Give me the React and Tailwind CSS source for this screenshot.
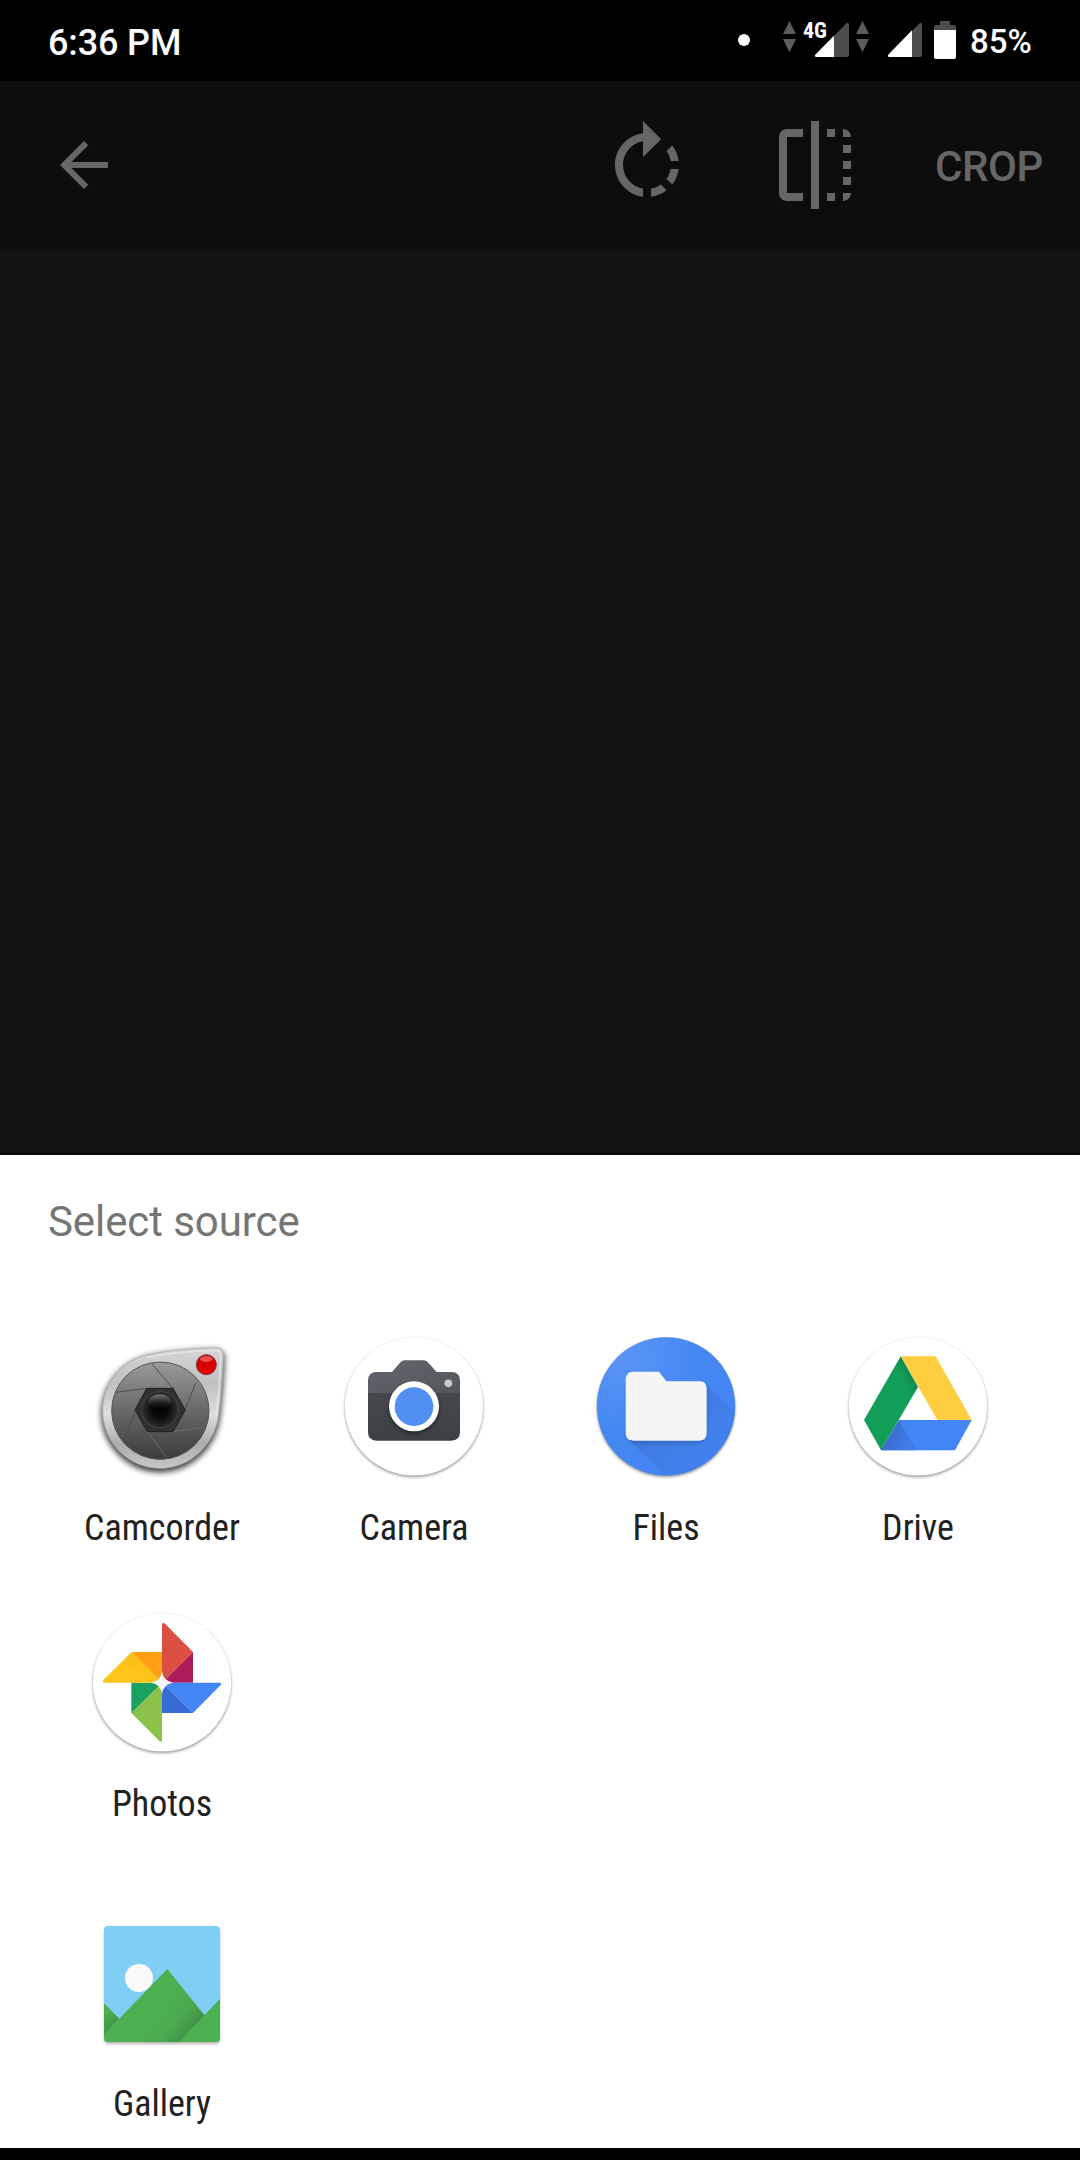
import React from "react";

function DataArrows({ className }) {
  return (
    <svg className={className} width="13" height="32" viewBox="0 0 39 96" fill="#5c5c5c">
      <path d="M19.500 0L39 39H0zM19.500 94L39 54H0z" />
    </svg>
  );
}

function Signal({ className, level }) {
  return (
    <svg className={className} width="34" height="34" viewBox="0 0 102 102">
      <path d="M0 97L93 2Q102 -4 102 6V96Q102 102 96 102H4Q-1 102 0 97Z" fill="#4d4d4d" />
      <path d={level === "low" ? "M0 96L57 38V102H4Q-1 102 0 96Z" : "M0 96L72 22V102H4Q-1 102 0 96Z"} fill="#fff" />
    </svg>
  );
}

function StatusBar() {
  return (
    <div className="flex h-[81px] items-start bg-black pl-12 text-white">
      <span className="mt-[22px] w-[690px] text-[36px] leading-[42px] font-medium tracking-[-0.15px]">6:36 PM</span>
      <span className="mt-[34px] h-3 w-3 shrink-0 rounded-full bg-white" />
      <DataArrows className="mt-[21px] ml-[33px] shrink-0" />
      <div className="relative mt-[23px] ml-[19px] shrink-0">
        <Signal level="low" />
        <span className="absolute -top-[5px] -left-[12px] font-['Roboto_Condensed','Roboto'] text-[22px] leading-[26px] font-bold">4G</span>
      </div>
      <DataArrows className="mt-[21px] ml-[7px] shrink-0" />
      <Signal className="mt-[23px] ml-[19px] shrink-0" level="high" />
      <svg className="mt-[21px] ml-3 shrink-0" width="22" height="38" viewBox="0 0 66 114">
        <path d="M18 0H48V12H60Q66 12 66 18V27H0V18Q0 12 6 12H18Z" fill="#4d4d4d" />
        <path d="M0 27H66V108Q66 114 60 114H6Q0 114 0 108Z" fill="#fff" />
      </svg>
      <span className="mt-[21px] ml-[14px] text-[33px] leading-[42px] font-medium">85%</span>
    </div>
  );
}

function Toolbar() {
  return (
    <div className="flex h-[168px] items-center bg-[#0d0d0d] pr-9 pl-12 text-[#666]">
      <svg width="72" height="72" viewBox="0 0 24 24" fill="currentColor">
        <path d="M20 11H7.830l5.590-5.590L12 4l-8 8 8 8 1.410-1.410L7.830 13H20v-2z" />
      </svg>
      <svg className="ml-auto" width="96" height="96" viewBox="0 0 24 24" fill="currentColor">
        <path d="M15.550 5.550L11 1v3.070C7.060 4.560 4 7.920 4 12s3.050 7.440 7 7.930v-2.020c-2.840-.48-5-2.940-5-5.910s2.160-5.430 5-5.910V10l4.550-4.450zM19.930 11c-.17-1.390-.72-2.730-1.620-3.890l-1.420 1.420c.54.75.88 1.600 1.020 2.470h2.020zM13 17.900v2.020c1.390-.17 2.740-.71 3.900-1.610l-1.440-1.440c-.75.54-1.590.89-2.460 1.030zm3.890-2.420l1.420 1.410c.9-1.160 1.450-2.500 1.620-3.890h-2.020c-.14.87-.48 1.720-1.020 2.480z" />
      </svg>
      <svg className="ml-[72px]" width="96" height="96" viewBox="0 0 24 24" fill="currentColor">
        <path d="M15 21h2v-2h-2v2zm4-12h2V7h-2v2zM3 5v14c0 1.100.9 2 2 2h4v-2H5V5h4V3H5c-1.100 0-2 .9-2 2zm16-2v2h2c0-1.100-.9-2-2-2zm-8 20h2V1h-2v22zm8-6h2v-2h-2v2zM15 5h2V3h-2v2zm4 8h2v-2h-2v2zm0 8c1.100 0 2-.9 2-2h-2v2z" />
      </svg>
      <span className="ml-[71px] w-[110px] pt-[3px] pl-px text-[42px] leading-[48px] font-medium tracking-[-0.4px] whitespace-nowrap">CROP</span>
    </div>
  );
}

function Disc({ cx, cy, fill = "#fff" }) {
  return (
    <>
      <circle cx={cx} cy={cy + 5} r="207" fill="#000" opacity=".42" filter="url(#disc-blur)" />
      <circle cx={cx} cy={cy} r="209" fill="#000" opacity=".04" />
      <circle cx={cx} cy={cy} r="207.500" fill={fill} />
    </>
  );
}

function CamcorderIcon() {
  return (
    <svg width="144" height="144" viewBox="60 48 432 432">
      <defs>
        <linearGradient id="cc-body" x1="0" y1="0" x2="0" y2="1">
          <stop offset="0" stopColor="#d6d6d6" />
          <stop offset=".3" stopColor="#c0c0c0" />
          <stop offset=".55" stopColor="#dedede" />
          <stop offset=".8" stopColor="#acacac" />
          <stop offset="1" stopColor="#c8c8c8" />
        </linearGradient>
        <linearGradient id="cc-blades" x1="0" y1="0" x2="0" y2="1">
          <stop offset="0" stopColor="#9a9a9a" />
          <stop offset=".5" stopColor="#686868" />
          <stop offset="1" stopColor="#3c3c3c" />
        </linearGradient>
        <radialGradient id="cc-lens">
          <stop offset="0" stopColor="#000" />
          <stop offset=".5" stopColor="#0c0c0c" />
          <stop offset="1" stopColor="#303030" />
        </radialGradient>
        <linearGradient id="cc-glare" x1="0" y1="0" x2="0" y2="1">
          <stop offset="0" stopColor="#777" />
          <stop offset="1" stopColor="#222" stopOpacity="0" />
        </linearGradient>
        <linearGradient id="cc-led" x1="0" y1="0" x2="0" y2="1">
          <stop offset="0" stopColor="#c40000" />
          <stop offset=".5" stopColor="#d60000" />
          <stop offset="1" stopColor="#f00000" />
        </linearGradient>
        <filter id="cc-shadow" x="-20%" y="-20%" width="140%" height="140%">
          <feGaussianBlur stdDeviation="10" />
        </filter>
        <filter id="cc-soft" x="-20%" y="-20%" width="140%" height="140%">
          <feGaussianBlur stdDeviation="2" />
        </filter>
      </defs>
      <path d="M226 106C305 88 375 86 438 84Q462 85 460 110C458 165 454 225 445 290C432 375 360 445 271 445C176 445 98 368 98 272C98 190 155 125 226 106Z" transform="translate(0 8)" fill="#000" stroke="#000" strokeWidth="6" opacity=".8" filter="url(#cc-shadow)" />
      <path d="M226 106C305 88 375 86 438 84Q462 85 460 110C458 165 454 225 445 290C432 375 360 445 271 445C176 445 98 368 98 272C98 190 155 125 226 106Z" fill="url(#cc-body)" stroke="#aaa" strokeWidth="2" />
      <path d="M230 113C305 96 375 93 436 91Q453 92 452 110C450 165 446 225 438 288" fill="none" stroke="#eee" strokeWidth="5" opacity=".6" filter="url(#cc-soft)" />
      <circle cx="271" cy="272" r="146" fill="url(#cc-blades)" stroke="#555" strokeWidth="3" />
      <g fill="none" stroke="#4b4b4b" strokeWidth="3">
        <path d="M246 132L310 206M138 217L229 205M162 362L197 270" />
        <path d="M378 187L344 272" />
      </g>
      <path d="M402 322L308 335M290 413L232 335" fill="none" stroke="#707070" strokeWidth="2.500" />
      <path d="M230 205H309L346 270L309 335H232L195 270Z" fill="#303030" stroke="#202020" strokeWidth="3" />
      <circle cx="270" cy="269" r="55" fill="url(#cc-lens)" stroke="#444" strokeWidth="3" />
      <ellipse cx="269" cy="244" rx="34" ry="21" fill="url(#cc-glare)" />
      <circle cx="409" cy="134" r="30" fill="url(#cc-led)" stroke="#713a3a" strokeWidth="3" />
      <ellipse cx="409" cy="117" rx="19" ry="9" fill="#ff8080" opacity=".6" filter="url(#cc-soft)" />
    </svg>
  );
}

function CameraIcon() {
  return (
    <svg width="144" height="144" viewBox="66 48 432 432">
      <defs>
        <filter id="disc-blur" x="-10%" y="-10%" width="120%" height="120%">
          <feGaussianBlur stdDeviation="4" />
        </filter>
        <filter id="cam-blur" x="-30%" y="-30%" width="160%" height="160%">
          <feGaussianBlur stdDeviation="7" />
        </filter>
        <linearGradient id="cam-top" x1="0" y1="0" x2="1" y2="1">
          <stop offset="0" stopColor="#5f656a" />
          <stop offset="1" stopColor="#52585d" />
        </linearGradient>
        <linearGradient id="cam-body" x1="0" y1="0" x2="0" y2="1">
          <stop offset="0" stopColor="#45484c" />
          <stop offset="1" stopColor="#3c3f44" />
        </linearGradient>
      </defs>
      <Disc cx={282} cy={259} />
      <path d="M144 218H420V336Q420 362 394 362H170Q144 362 144 336Z" fill="url(#cam-body)" />
      <path d="M144 219V182Q144 156 170 156H216L240 128Q246 121 255 121H310Q319 121 325 128L350 156H394Q420 156 420 182V219Z" fill="url(#cam-top)" />
      <circle cx="282" cy="266" r="75" fill="#000" opacity=".4" filter="url(#cam-blur)" />
      <circle cx="282" cy="259" r="75" fill="#fff" />
      <circle cx="282" cy="260" r="58" fill="#528ff3" />
      <circle cx="385" cy="190" r="11.500" fill="#c8caca" />
    </svg>
  );
}

function FilesIcon() {
  return (
    <svg width="144" height="144" viewBox="72 48 432 432">
      <defs>
        <radialGradient id="files-bg" cx=".2" cy=".17" r=".9">
          <stop offset="0" stopColor="#5894f4" />
          <stop offset=".6" stopColor="#4588f3" />
          <stop offset="1" stopColor="#4285f4" />
        </radialGradient>
        <linearGradient id="files-shade" gradientUnits="userSpaceOnUse" x1="288" y1="270" x2="395" y2="377">
          <stop offset="0" stopColor="#3a6cc9" stopOpacity=".6" />
          <stop offset="1" stopColor="#3f78dc" stopOpacity=".35" />
        </linearGradient>
        <clipPath id="files-clip"><circle cx="288" cy="259" r="207" /></clipPath>
      </defs>
      <Disc cx={288} cy={259} fill="url(#files-bg)" />
      <g clipPath="url(#files-clip)">
        <path d="M174 356L300 482H510V290L404 190Z" fill="url(#files-shade)" />
        <rect x="170" y="194" width="238" height="173" rx="24" fill="#214484" opacity=".5" filter="url(#cam-blur)" />
      </g>
      <path d="M190 155H267L289 184H388Q410 184 410 206V340Q410 362 388 362H190Q167 362 167 340V178Q167 155 190 155Z" fill="#f5f5f5" />
    </svg>
  );
}

function DriveIcon() {
  return (
    <svg width="144" height="144" viewBox="78 48 432 432">
      <defs>
        <linearGradient id="drive-shade" gradientUnits="userSpaceOnUse" x1="208" y1="346" x2="262" y2="376">
          <stop offset="0" stopColor="#3a6dd0" />
          <stop offset="1" stopColor="#407be6" />
        </linearGradient>
        <linearGradient id="drive-green" gradientUnits="userSpaceOnUse" x1="276" y1="158" x2="250" y2="172">
          <stop offset="0" stopColor="#0d8449" />
          <stop offset="1" stopColor="#129d58" />
        </linearGradient>
      </defs>
      <Disc cx={294} cy={259} />
      <path d="M242 109H347L455 300H352Z" fill="#ffcd40" />
      <path d="M242 109L294 201L183 391L132 300Z" fill="url(#drive-green)" />
      <path d="M237 300H455L405 391H183Z" fill="#4285f4" />
      <path d="M237 300L288 391H183Z" fill="url(#drive-shade)" />
    </svg>
  );
}

function PhotosIcon() {
  return (
    <svg width="144" height="144" viewBox="60 36 432 432">
      <defs>
        <linearGradient id="ph-yellow" x1="0" y1="1" x2="1" y2="0">
          <stop offset=".4" stopColor="#ffc518" />
          <stop offset="1" stopColor="#f5b70f" />
        </linearGradient>
        <linearGradient id="ph-lime" x1="0" y1="0" x2="1" y2="1">
          <stop offset="0" stopColor="#7fb84c" />
          <stop offset=".5" stopColor="#8bc34a" />
        </linearGradient>
      </defs>
      <Disc cx={276} cy={247} />
      <path d="M276 72Q280 67 285 71L369 156L276 248Z" fill="#db4f42" />
      <path d="M369 156V248H276Z" fill="#ae1b5a" />
      <path d="M276 248H450Q456 250 452 255L369 339Z" fill="#4285f4" />
      <path d="M276 248L369 339H276Z" fill="#386ad6" />
      <path d="M276 248V421Q274 427 269 424L184 339Z" fill="url(#ph-lime)" />
      <path d="M276 248L184 339V248Z" fill="#1aa15f" />
      <path d="M276 248H101Q96 245 100 240L185 156Z" fill="url(#ph-yellow)" />
      <path d="M185 156H276V248Z" fill="#ff9f14" />
      <path d="M276 214Q280 243 309 248Q280 252 276 282Q272 252 243 248Q272 243 276 214Z" fill="#f5f5f5" />
    </svg>
  );
}

function GalleryIcon() {
  return (
    <svg width="144" height="144" viewBox="60 36 432 432">
      <defs>
        <linearGradient id="gal-main" gradientUnits="userSpaceOnUse" x1="365" y1="385" x2="285" y2="325">
          <stop offset="0" stopColor="#429546" />
          <stop offset=".5" stopColor="#4ba94f" />
          <stop offset="1" stopColor="#4caf50" />
        </linearGradient>
        <linearGradient id="gal-left" gradientUnits="userSpaceOnUse" x1="125" y1="380" x2="98" y2="352">
          <stop offset="0" stopColor="#429546" />
          <stop offset="1" stopColor="#4caf50" />
        </linearGradient>
        <clipPath id="gal-clip"><rect x="102" y="78" width="348" height="348" rx="12" /></clipPath>
        <filter id="gal-blur"><feGaussianBlur stdDeviation="4" /></filter>
      </defs>
      <rect x="103" y="84" width="346" height="348" rx="12" fill="#000" opacity=".3" filter="url(#gal-blur)" />
      <g clipPath="url(#gal-clip)">
        <path d="M102 78H450V426H102Z" fill="#81cef4" />
        <circle cx="207" cy="234" r="42" fill="#fafafa" />
        <path d="M102 310L148 356L102 405Z" fill="url(#gal-left)" />
        <path d="M292 207L403 345L430 426H102V403Z" fill="url(#gal-main)" />
        <path d="M450 296V426H327Z" fill="#4caf50" />
      </g>
    </svg>
  );
}

function Source({ icon, label }) {
  return (
    <div className="flex w-[252px] flex-col items-center">
      {icon}
      <span className="mt-[27px] font-['Roboto_Condensed','Roboto'] text-[36px] leading-[42px] text-[#212121]">{label}</span>
    </div>
  );
}

export default function App() {
  return (
    <div className="flex h-[2160px] w-[1080px] flex-col overflow-hidden bg-[#131313] font-['Roboto',sans-serif]">
      <StatusBar />
      <Toolbar />
      <div className="flex-1" />
      <div className="h-[993px] bg-white px-9 pt-[42px] shadow-[0_0_4px_#000]">
        <h1 className="px-3 text-[42px] leading-[50px] tracking-[-0.08px] text-[#757575]">Select source</h1>
        <div className="mt-[89px] flex h-[276px]">
          <Source icon={<CamcorderIcon />} label="Camcorder" />
          <Source icon={<CameraIcon />} label="Camera" />
          <Source icon={<FilesIcon />} label="Files" />
          <Source icon={<DriveIcon />} label="Drive" />
        </div>
        <div className="flex h-[300px]">
          <Source icon={<PhotosIcon />} label="Photos" />
        </div>
        <div className="flex">
          <Source icon={<GalleryIcon />} label="Gallery" />
        </div>
      </div>
      <div className="h-3 bg-black" />
    </div>
  );
}
